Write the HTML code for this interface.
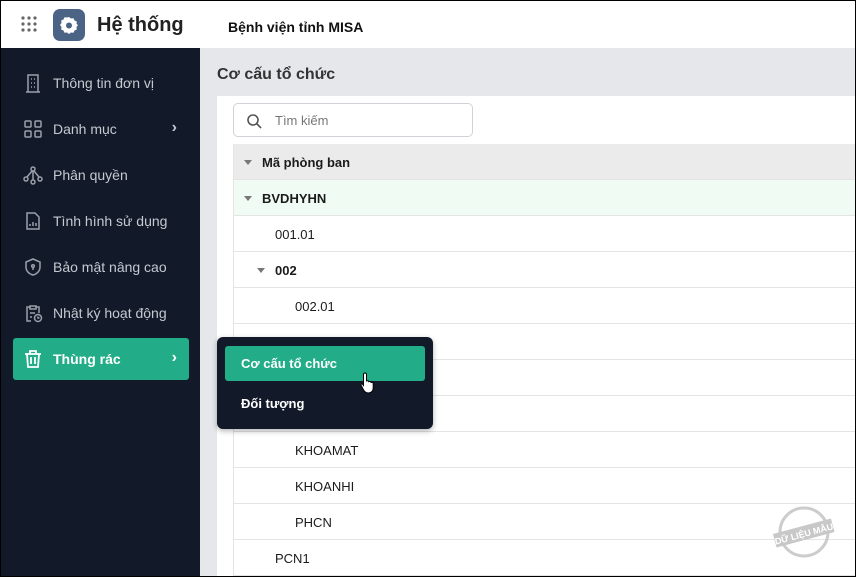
<!DOCTYPE html>
<html><head><meta charset="utf-8"><style>
*{box-sizing:border-box;margin:0;padding:0}
body{width:856px;height:577px;overflow:hidden;font-family:"Liberation Sans","Noto Sans CJK SC",sans-serif;background:#000;position:relative}
#f{position:absolute;left:1px;top:1px;width:854px;height:575px;background:#e5e7eb;overflow:hidden}
.top{position:absolute;left:0;top:0;width:854px;height:47px;background:#fff}
.side{position:absolute;left:0;top:47px;width:199px;height:530px;background:#121a29}
.it{position:absolute;left:12px;width:176px;height:42px;color:#c5c9d0;font-size:14px;display:flex;align-items:center;padding-left:40px}
.it svg{position:absolute;left:10px;top:11px}
.act{background:#22ad88;color:#fff;font-weight:bold;border-radius:3px}
.chev{position:absolute;right:12px;top:11px;font-size:16px;font-weight:bold}
.panel{position:absolute;left:216px;top:95px;width:640px;height:490px;background:#fff}
.row{position:absolute;left:232px;width:622px;height:36px;border-bottom:1px solid #e4e4e4;border-left:1px solid #e4e4e4;font-size:13px;color:#1b1b1b;display:flex;align-items:center;padding-top:2px}
.tri{display:inline-block;width:0;height:0;border-left:4px solid transparent;border-right:4px solid transparent;border-top:5px solid #777;margin-right:10px}
</style></head><body><div id="f">
<div class="top">
<svg style="position:absolute;left:20px;top:15px" width="16" height="16"><g fill="#666"><circle cx="2" cy="2" r="1.6"/><circle cx="8" cy="2" r="1.6"/><circle cx="14" cy="2" r="1.6"/><circle cx="2" cy="8" r="1.6"/><circle cx="8" cy="8" r="1.6"/><circle cx="14" cy="8" r="1.6"/><circle cx="2" cy="14" r="1.6"/><circle cx="8" cy="14" r="1.6"/><circle cx="14" cy="14" r="1.6"/></g></svg>
<div style="position:absolute;left:52px;top:8px;width:32px;height:32px;border-radius:7px;background:#4b6486"></div>
<svg style="position:absolute;left:58px;top:14px" width="20" height="20" viewBox="0 0 20 20"><path d="M10 2l2 1.5 2.5-.3 1 2.3 2.3 1-.3 2.5L19 10l-1.5 2 .3 2.5-2.3 1-1 2.3-2.5-.3L10 19l-2-1.5-2.5.3-1-2.3-2.3-1 .3-2.5L1 10l1.5-2-.3-2.5 2.3-1 1-2.3 2.5.3z" fill="#fff"/><circle cx="10" cy="10.5" r="3" fill="#4b6486"/></svg>
<div style="position:absolute;left:96px;top:13px;font-size:20px;font-weight:bold;color:#222">Hệ thống</div>
<div style="position:absolute;left:227px;top:18px;font-size:14px;font-weight:bold;color:#111">Bệnh viện tỉnh MISA</div>
</div>
<div class="side">
<div class="it" style="top:14px"><svg width="20" height="20" fill="none" stroke="#9aa0aa" stroke-width="1.5"><path d="M3 19h14M5 19V2h10v17M8 6h1M11 6h1M8 10h1M11 10h1M8 14h1M11 14h1"/></svg>Thông tin đơn vị</div>
<div class="it" style="top:60px"><svg width="20" height="20" fill="none" stroke="#9aa0aa" stroke-width="1.5"><rect x="2" y="2" width="6" height="6" rx="1"/><rect x="12" y="2" width="6" height="6" rx="1"/><rect x="2" y="12" width="6" height="6" rx="1"/><rect x="12" y="12" width="6" height="6" rx="1"/></svg>Danh mục<span class="chev">›</span></div>
<div class="it" style="top:106px"><svg width="20" height="20" fill="none" stroke="#9aa0aa" stroke-width="1.5"><circle cx="10" cy="4" r="2"/><circle cx="3" cy="14" r="2"/><circle cx="17" cy="14" r="2"/><circle cx="10" cy="17" r="2"/><path d="M9 6l-5 6M11 6l5 6M10 6v9"/></svg>Phân quyền</div>
<div class="it" style="top:152px"><svg width="20" height="20" fill="none" stroke="#9aa0aa" stroke-width="1.5"><path d="M4 2h8l4 4v12H4z M7 15v-2M10 15v-4M13 15v-3"/></svg>Tình hình sử dụng</div>
<div class="it" style="top:198px"><svg width="20" height="20" fill="none" stroke="#9aa0aa" stroke-width="1.5"><path d="M10 2l7 3v5c0 4-3 7-7 8-4-1-7-4-7-8V5z"/><circle cx="10" cy="9" r="1.3"/><path d="M10 10v3"/></svg>Bảo mật nâng cao</div>
<div class="it" style="top:244px"><svg width="20" height="20" fill="none" stroke="#9aa0aa" stroke-width="1.5"><path d="M8 18H4V4h3M13 4h3v6M7 3h6v3H7zM7 10h5M7 14h2"/><circle cx="15" cy="15" r="3.5"/><path d="M15 13.5V15h1.5"/></svg>Nhật ký hoạt động</div>
<div class="it act" style="top:290px"><svg width="20" height="20" fill="none" stroke="#fff" stroke-width="1.8"><path d="M2 5h16M7 5V2h6v3M4 5l1 13h10l1-13M8 8v7M12 8v7"/></svg>Thùng rác<span class="chev">›</span></div>
</div>
<div style="position:absolute;left:216px;top:65px;font-size:16px;color:#333;font-weight:bold">Cơ cấu tổ chức</div>
<div class="panel"></div>
<div style="position:absolute;left:232px;top:102px;width:240px;height:34px;border:1px solid #cfd3d8;border-radius:5px;background:#fff"><svg style="position:absolute;left:12px;top:9px" width="16" height="16" fill="none" stroke="#555" stroke-width="1.6"><circle cx="7" cy="7" r="5"/><path d="M11 11l4 4"/></svg><span style="position:absolute;left:41px;top:9px;font-size:13px;color:#777">Tìm kiếm</span></div>
<div class="row" style="top:143px;background:#ebebeb;font-weight:bold;padding-left:10px"><span class="tri"></span>Mã phòng ban</div>
<div class="row" style="top:179px;background:#effbf3;font-weight:bold;padding-left:10px"><span class="tri"></span>BVDHYHN</div>
<div class="row" style="top:215px;padding-left:41px">001.01</div>
<div class="row" style="top:251px;font-weight:bold;padding-left:23px"><span class="tri"></span>002</div>
<div class="row" style="top:287px;padding-left:61px">002.01</div>
<div class="row" style="top:323px"></div>
<div class="row" style="top:359px"></div>
<div class="row" style="top:395px"></div>
<div class="row" style="top:431px;padding-left:61px">KHOAMAT</div>
<div class="row" style="top:467px;padding-left:61px">KHOANHI</div>
<div class="row" style="top:503px;padding-left:61px">PHCN</div>
<div class="row" style="top:539px;padding-left:41px">PCN1</div>
<svg style="position:absolute;left:768px;top:503px" width="70" height="60" viewBox="0 0 70 60"><circle cx="35" cy="28" r="24" fill="none" stroke="#ccc" stroke-width="3"/><g transform="rotate(-15 35 30)"><rect x="5" y="22" width="60" height="14" fill="#c8c8c8"/><text x="35" y="33" font-size="9" font-weight="bold" fill="#fff" text-anchor="middle" font-family="Liberation Sans">DỮ LIỆU MẪU</text></g></svg>
<div style="position:absolute;left:216px;top:336px;width:216px;height:92px;background:#121a29;border-radius:6px;box-shadow:0 2px 6px rgba(0,0,0,.3)">
<div style="position:absolute;left:8px;top:9px;width:200px;height:35px;background:#22ad88;border-radius:3px;color:#fff;font-weight:bold;font-size:13px;padding:10px 0 0 16px">Cơ cấu tổ chức</div>
<div style="position:absolute;left:24px;top:59px;color:#fff;font-weight:bold;font-size:13px">Đối tượng</div>
</div>
<svg style="position:absolute;left:359px;top:370px" width="16" height="24" viewBox="0 0 16 24"><path d="M5 2c1 0 1.5.5 1.5 1.5V10l1-.3c.8 0 1.2.5 1.2 1l1-.3c.8 0 1.2.5 1.2 1l1-.2c.8 0 1.3.6 1.3 1.3V17c0 3-2 5-5 5S4 20 2.5 17L1 14c-.3-.8.5-1.5 1.3-1l1.2 1.5V3.5C3.5 2.5 4 2 5 2z" fill="#fff" stroke="#000" stroke-width="1"/></svg>
</div></body></html>
